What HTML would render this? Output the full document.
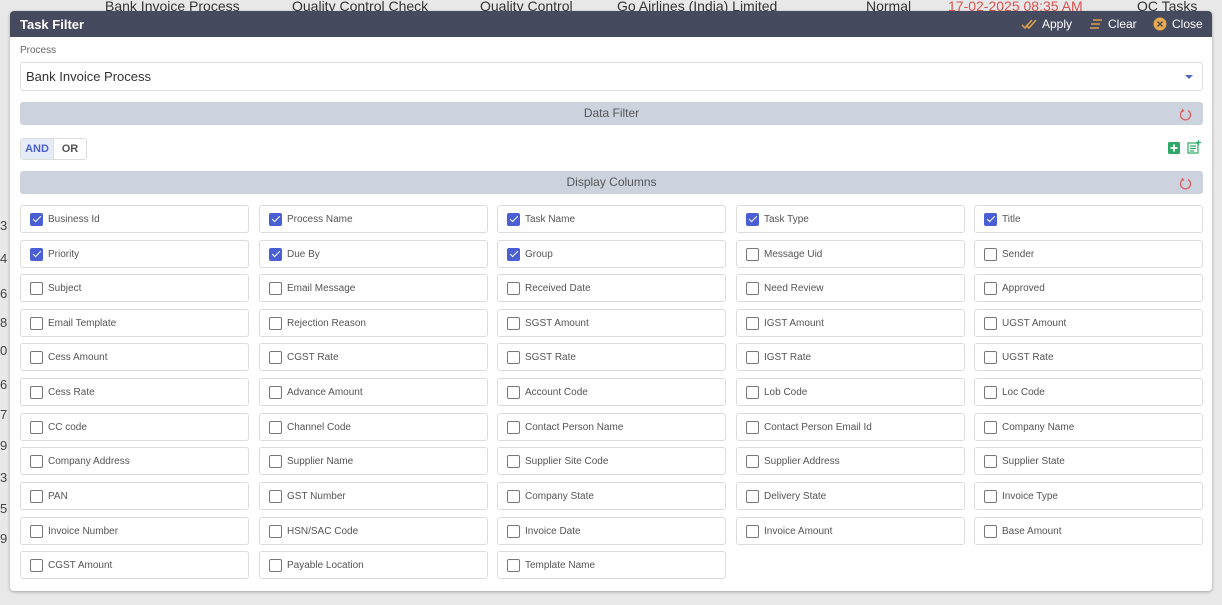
<!DOCTYPE html>
<html><head><meta charset="utf-8"><style>
*{box-sizing:border-box;margin:0;padding:0}
body{width:1222px;height:605px;background:#e8e8e8;font-family:"Liberation Sans",sans-serif;position:relative;overflow:hidden}
.a{position:absolute}
.bgt{font-size:14px;color:#333;top:-2px}
.rn{left:0;font-size:13px;color:#444}
.modal{left:10px;top:11px;width:1202px;height:580px;background:#fff;border-radius:4px;box-shadow:0 1px 3px rgba(0,0,0,.3)}
.hdr{left:10px;top:11px;width:1202px;height:26px;background:#454a5e;border-radius:4px 4px 0 0}
.cb{position:absolute;width:229px;height:28px;border:1px solid #dcdcdc;border-radius:3px;background:#fff;font-size:10px;color:#555}
.cb i{position:absolute;left:9px;top:7px;width:13px;height:13px;border:1.3px solid #777;border-radius:2px}
.cb i.c{background:#4a5fd4;border-color:#4a5fd4}
.cb i.c:after{content:"";position:absolute;left:3.5px;top:0px;width:3px;height:7px;border:solid #fff;border-width:0 1.5px 1.5px 0;transform:rotate(45deg)}
.cb span{position:absolute;left:27px;top:8px}
.bar{left:20px;width:1183px;height:23px;background:#ccd3de;border-radius:3px;text-align:center;font-size:12px;color:#555;line-height:23px}
</style></head><body>
<div class="a bgt" style="left:105px">Bank Invoice Process</div>
<div class="a bgt" style="left:292px">Quality Control Check</div>
<div class="a bgt" style="left:480px">Quality Control</div>
<div class="a bgt" style="left:617px">Go Airlines (India) Limited</div>
<div class="a bgt" style="left:866px">Normal</div>
<div class="a bgt" style="left:948px;color:#d9534f">17-02-2025 08:35 AM</div>
<div class="a bgt" style="left:1137px">QC Tasks</div>
<div class="a rn" style="top:218px">3</div><div class="a rn" style="top:251px">4</div><div class="a rn" style="top:286px">6</div><div class="a rn" style="top:315px">8</div><div class="a rn" style="top:343px">0</div><div class="a rn" style="top:377px">6</div><div class="a rn" style="top:407px">7</div><div class="a rn" style="top:438px">9</div><div class="a rn" style="top:470px">3</div><div class="a rn" style="top:501px">5</div><div class="a rn" style="top:531px">9</div>
<div class="a modal"></div>
<div class="a hdr"></div>
<div class="a" style="left:20px;top:17px;color:#fff;font-size:13px;font-weight:bold">Task Filter</div>
<svg class="a" style="left:1021px;top:18px" width="16" height="12"><path d="M1 7l3 3 7-8M5 7l3 3 7-8" stroke="#e0a04a" stroke-width="1.5" fill="none"/></svg>
<div class="a" style="left:1042px;top:17px;color:#fff;font-size:12px">Apply</div>
<svg class="a" style="left:1089px;top:18px" width="14" height="12"><path d="M4 2h9M2 6h9M1 10h9" stroke="#e0a04a" stroke-width="1.6"/></svg>
<div class="a" style="left:1108px;top:17px;color:#fff;font-size:12px">Clear</div>
<svg class="a" style="left:1153px;top:17px" width="14" height="14"><circle cx="7" cy="7" r="6.5" fill="#e9a84c"/><path d="M4.5 4.5l5 5M9.5 4.5l-5 5" stroke="#454a5e" stroke-width="1.4"/></svg>
<div class="a" style="left:1172px;top:17px;color:#fff;font-size:12px">Close</div>
<div class="a" style="left:20px;top:45px;font-size:10px;color:#666">Process</div>
<div class="a" style="left:20px;top:62px;width:1183px;height:29px;border:1px solid #ddd;border-radius:3px"></div>
<div class="a" style="left:26px;top:69px;font-size:13px;color:#333">Bank Invoice Process</div>
<div class="a" style="left:1185px;top:75px;width:0;height:0;border-left:4px solid transparent;border-right:4px solid transparent;border-top:4px solid #5566c0"></div>
<div class="a bar" style="top:102px">Data Filter</div>
<svg class="a" style="left:1179px;top:108px" width="13" height="13"><path d="M4 2.5A5 5 0 1 0 9 2.5" stroke="#e06060" stroke-width="1.3" fill="none"/><path d="M3 1l1.5 2L2 3.5" stroke="#e06060" stroke-width="1.2" fill="none"/></svg>
<div class="a" style="left:20px;top:138px;width:67px;height:22px;border:1px solid #ddd;border-radius:3px"></div>
<div class="a" style="left:21px;top:139px;width:32px;height:20px;background:#e6ecf7;color:#4a5fd4;font-size:11px;font-weight:bold;text-align:center;line-height:20px">AND</div>
<div class="a" style="left:53px;top:139px;width:33px;height:20px;color:#555;font-size:11px;font-weight:bold;text-align:center;line-height:20px;border-left:1px solid #ddd">OR</div>
<svg class="a" style="left:1168px;top:142px" width="12" height="12"><rect width="12" height="12" rx="1.5" fill="#2ea866"/><path d="M6 2.5v7M2.5 6h7" stroke="#fff" stroke-width="1.8"/></svg>
<svg class="a" style="left:1187px;top:140px" width="14" height="14"><rect x="1" y="3" width="10" height="10" fill="none" stroke="#2ea866" stroke-width="1.2"/><path d="M3 6h6M3 8.5h6M3 11h4M11.5 0v5M9 2.5h5" stroke="#2ea866" stroke-width="1.2"/></svg>
<div class="a bar" style="top:171px">Display Columns</div>
<svg class="a" style="left:1179px;top:177px" width="13" height="13"><path d="M4 2.5A5 5 0 1 0 9 2.5" stroke="#e06060" stroke-width="1.3" fill="none"/><path d="M3 1l1.5 2L2 3.5" stroke="#e06060" stroke-width="1.2" fill="none"/></svg>

<div class="cb" style="left:20px;top:205px"><i class="c"></i><span>Business Id</span></div>
<div class="cb" style="left:259px;top:205px"><i class="c"></i><span>Process Name</span></div>
<div class="cb" style="left:497px;top:205px"><i class="c"></i><span>Task Name</span></div>
<div class="cb" style="left:736px;top:205px"><i class="c"></i><span>Task Type</span></div>
<div class="cb" style="left:974px;top:205px"><i class="c"></i><span>Title</span></div>

<div class="cb" style="left:20px;top:240px"><i class="c"></i><span>Priority</span></div>
<div class="cb" style="left:259px;top:240px"><i class="c"></i><span>Due By</span></div>
<div class="cb" style="left:497px;top:240px"><i class="c"></i><span>Group</span></div>
<div class="cb" style="left:736px;top:240px"><i></i><span>Message Uid</span></div>
<div class="cb" style="left:974px;top:240px"><i></i><span>Sender</span></div>

<div class="cb" style="left:20px;top:274px"><i></i><span>Subject</span></div>
<div class="cb" style="left:259px;top:274px"><i></i><span>Email Message</span></div>
<div class="cb" style="left:497px;top:274px"><i></i><span>Received Date</span></div>
<div class="cb" style="left:736px;top:274px"><i></i><span>Need Review</span></div>
<div class="cb" style="left:974px;top:274px"><i></i><span>Approved</span></div>

<div class="cb" style="left:20px;top:309px"><i></i><span>Email Template</span></div>
<div class="cb" style="left:259px;top:309px"><i></i><span>Rejection Reason</span></div>
<div class="cb" style="left:497px;top:309px"><i></i><span>SGST Amount</span></div>
<div class="cb" style="left:736px;top:309px"><i></i><span>IGST Amount</span></div>
<div class="cb" style="left:974px;top:309px"><i></i><span>UGST Amount</span></div>

<div class="cb" style="left:20px;top:343px"><i></i><span>Cess Amount</span></div>
<div class="cb" style="left:259px;top:343px"><i></i><span>CGST Rate</span></div>
<div class="cb" style="left:497px;top:343px"><i></i><span>SGST Rate</span></div>
<div class="cb" style="left:736px;top:343px"><i></i><span>IGST Rate</span></div>
<div class="cb" style="left:974px;top:343px"><i></i><span>UGST Rate</span></div>

<div class="cb" style="left:20px;top:378px"><i></i><span>Cess Rate</span></div>
<div class="cb" style="left:259px;top:378px"><i></i><span>Advance Amount</span></div>
<div class="cb" style="left:497px;top:378px"><i></i><span>Account Code</span></div>
<div class="cb" style="left:736px;top:378px"><i></i><span>Lob Code</span></div>
<div class="cb" style="left:974px;top:378px"><i></i><span>Loc Code</span></div>

<div class="cb" style="left:20px;top:413px"><i></i><span>CC code</span></div>
<div class="cb" style="left:259px;top:413px"><i></i><span>Channel Code</span></div>
<div class="cb" style="left:497px;top:413px"><i></i><span>Contact Person Name</span></div>
<div class="cb" style="left:736px;top:413px"><i></i><span>Contact Person Email Id</span></div>
<div class="cb" style="left:974px;top:413px"><i></i><span>Company Name</span></div>

<div class="cb" style="left:20px;top:447px"><i></i><span>Company Address</span></div>
<div class="cb" style="left:259px;top:447px"><i></i><span>Supplier Name</span></div>
<div class="cb" style="left:497px;top:447px"><i></i><span>Supplier Site Code</span></div>
<div class="cb" style="left:736px;top:447px"><i></i><span>Supplier Address</span></div>
<div class="cb" style="left:974px;top:447px"><i></i><span>Supplier State</span></div>

<div class="cb" style="left:20px;top:482px"><i></i><span>PAN</span></div>
<div class="cb" style="left:259px;top:482px"><i></i><span>GST Number</span></div>
<div class="cb" style="left:497px;top:482px"><i></i><span>Company State</span></div>
<div class="cb" style="left:736px;top:482px"><i></i><span>Delivery State</span></div>
<div class="cb" style="left:974px;top:482px"><i></i><span>Invoice Type</span></div>

<div class="cb" style="left:20px;top:517px"><i></i><span>Invoice Number</span></div>
<div class="cb" style="left:259px;top:517px"><i></i><span>HSN/SAC Code</span></div>
<div class="cb" style="left:497px;top:517px"><i></i><span>Invoice Date</span></div>
<div class="cb" style="left:736px;top:517px"><i></i><span>Invoice Amount</span></div>
<div class="cb" style="left:974px;top:517px"><i></i><span>Base Amount</span></div>

<div class="cb" style="left:20px;top:551px"><i></i><span>CGST Amount</span></div>
<div class="cb" style="left:259px;top:551px"><i></i><span>Payable Location</span></div>
<div class="cb" style="left:497px;top:551px"><i></i><span>Template Name</span></div>
</body></html>
